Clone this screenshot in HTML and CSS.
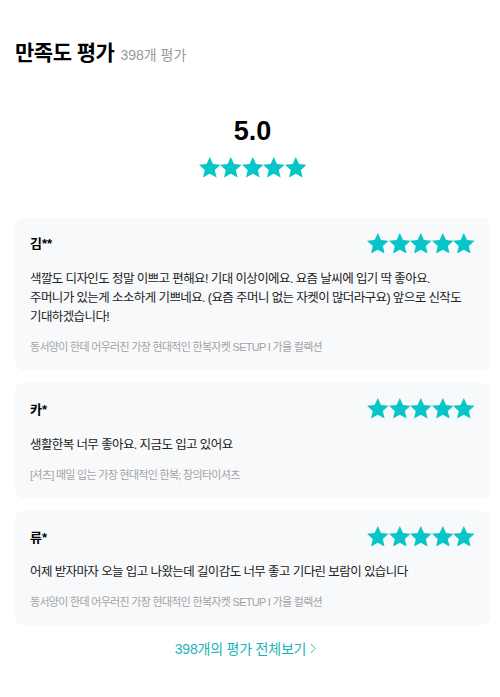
FILE: index.html
```html
<html lang="ko">
<head>
    <meta charset="UTF-8">
    <meta name="viewport" content="width=device-width, initial-scale=1.0">
    <title>만족도 평가</title>
    <link rel="stylesheet" href="styles.css">
</head>
<body>
    <div class="review-section">
        <div class="review-title">
            <h2>만족도 평가</h2>
            <span class="review-count">398개 평가</span>
        </div>

        <div class="review-score">
            <div class="score-num">5.0</div>
            <div class="stars">
                <svg viewBox="1.5 1.5 21 20"><path d="M12 1.5l3.1 6.9 7.4.7-5.6 5 1.7 7.4L12 17.7l-6.6 3.8 1.7-7.4-5.6-5 7.4-.7z"/></svg>
                <svg viewBox="1.5 1.5 21 20"><path d="M12 1.5l3.1 6.9 7.4.7-5.6 5 1.7 7.4L12 17.7l-6.6 3.8 1.7-7.4-5.6-5 7.4-.7z"/></svg>
                <svg viewBox="1.5 1.5 21 20"><path d="M12 1.5l3.1 6.9 7.4.7-5.6 5 1.7 7.4L12 17.7l-6.6 3.8 1.7-7.4-5.6-5 7.4-.7z"/></svg>
                <svg viewBox="1.5 1.5 21 20"><path d="M12 1.5l3.1 6.9 7.4.7-5.6 5 1.7 7.4L12 17.7l-6.6 3.8 1.7-7.4-5.6-5 7.4-.7z"/></svg>
                <svg viewBox="1.5 1.5 21 20"><path d="M12 1.5l3.1 6.9 7.4.7-5.6 5 1.7 7.4L12 17.7l-6.6 3.8 1.7-7.4-5.6-5 7.4-.7z"/></svg>
            </div>
        </div>

        <div class="review-list">
            <div class="review-card">
                <div class="review-head">
                    <span class="review-name">김**</span>
                    <div class="stars">
                        <svg viewBox="1.5 1.5 21 20"><path d="M12 1.5l3.1 6.9 7.4.7-5.6 5 1.7 7.4L12 17.7l-6.6 3.8 1.7-7.4-5.6-5 7.4-.7z"/></svg>
                        <svg viewBox="1.5 1.5 21 20"><path d="M12 1.5l3.1 6.9 7.4.7-5.6 5 1.7 7.4L12 17.7l-6.6 3.8 1.7-7.4-5.6-5 7.4-.7z"/></svg>
                        <svg viewBox="1.5 1.5 21 20"><path d="M12 1.5l3.1 6.9 7.4.7-5.6 5 1.7 7.4L12 17.7l-6.6 3.8 1.7-7.4-5.6-5 7.4-.7z"/></svg>
                        <svg viewBox="1.5 1.5 21 20"><path d="M12 1.5l3.1 6.9 7.4.7-5.6 5 1.7 7.4L12 17.7l-6.6 3.8 1.7-7.4-5.6-5 7.4-.7z"/></svg>
                        <svg viewBox="1.5 1.5 21 20"><path d="M12 1.5l3.1 6.9 7.4.7-5.6 5 1.7 7.4L12 17.7l-6.6 3.8 1.7-7.4-5.6-5 7.4-.7z"/></svg>
                    </div>
                </div>
                <p class="review-text">색깔도 디자인도 정말 이쁘고 편해요! 기대 이상이에요. 요즘 날씨에 입기 딱 좋아요.<br>주머니가 있는게 소소하게 기쁘네요. (요즘 주머니 없는 자켓이 많더라구요) 앞으로 신작도 기대하겠습니다!</p>
                <div class="review-product">동서양이 한데 어우러진 가장 현대적인 한복자켓 SETUP I 가을 컬렉션</div>
            </div>

            <div class="review-card">
                <div class="review-head">
                    <span class="review-name">카*</span>
                    <div class="stars">
                        <svg viewBox="1.5 1.5 21 20"><path d="M12 1.5l3.1 6.9 7.4.7-5.6 5 1.7 7.4L12 17.7l-6.6 3.8 1.7-7.4-5.6-5 7.4-.7z"/></svg>
                        <svg viewBox="1.5 1.5 21 20"><path d="M12 1.5l3.1 6.9 7.4.7-5.6 5 1.7 7.4L12 17.7l-6.6 3.8 1.7-7.4-5.6-5 7.4-.7z"/></svg>
                        <svg viewBox="1.5 1.5 21 20"><path d="M12 1.5l3.1 6.9 7.4.7-5.6 5 1.7 7.4L12 17.7l-6.6 3.8 1.7-7.4-5.6-5 7.4-.7z"/></svg>
                        <svg viewBox="1.5 1.5 21 20"><path d="M12 1.5l3.1 6.9 7.4.7-5.6 5 1.7 7.4L12 17.7l-6.6 3.8 1.7-7.4-5.6-5 7.4-.7z"/></svg>
                        <svg viewBox="1.5 1.5 21 20"><path d="M12 1.5l3.1 6.9 7.4.7-5.6 5 1.7 7.4L12 17.7l-6.6 3.8 1.7-7.4-5.6-5 7.4-.7z"/></svg>
                    </div>
                </div>
                <p class="review-text">생활한복 너무 좋아요. 지금도 입고 있어요</p>
                <div class="review-product">[셔츠] 매일 입는 가장 현대적인 한복; 창의타이셔츠</div>
            </div>

            <div class="review-card">
                <div class="review-head">
                    <span class="review-name">류*</span>
                    <div class="stars">
                        <svg viewBox="1.5 1.5 21 20"><path d="M12 1.5l3.1 6.9 7.4.7-5.6 5 1.7 7.4L12 17.7l-6.6 3.8 1.7-7.4-5.6-5 7.4-.7z"/></svg>
                        <svg viewBox="1.5 1.5 21 20"><path d="M12 1.5l3.1 6.9 7.4.7-5.6 5 1.7 7.4L12 17.7l-6.6 3.8 1.7-7.4-5.6-5 7.4-.7z"/></svg>
                        <svg viewBox="1.5 1.5 21 20"><path d="M12 1.5l3.1 6.9 7.4.7-5.6 5 1.7 7.4L12 17.7l-6.6 3.8 1.7-7.4-5.6-5 7.4-.7z"/></svg>
                        <svg viewBox="1.5 1.5 21 20"><path d="M12 1.5l3.1 6.9 7.4.7-5.6 5 1.7 7.4L12 17.7l-6.6 3.8 1.7-7.4-5.6-5 7.4-.7z"/></svg>
                        <svg viewBox="1.5 1.5 21 20"><path d="M12 1.5l3.1 6.9 7.4.7-5.6 5 1.7 7.4L12 17.7l-6.6 3.8 1.7-7.4-5.6-5 7.4-.7z"/></svg>
                    </div>
                </div>
                <p class="review-text">어제 받자마자 오늘 입고 나왔는데 길이감도 너무 좋고 기다린 보람이 있습니다</p>
                <div class="review-product">동서양이 한데 어우러진 가장 현대적인 한복자켓 SETUP I 가을 컬렉션</div>
            </div>
        </div>

        <a class="review-more" href="#">398개의 평가 전체보기
            <svg viewBox="0 0 8 14"><path d="M1 1l6 6-6 6"/></svg>
        </a>
    </div>
</body>
</html>
```

FILE: styles.css
```css
body {
    margin: 0px;
    background-color: white;
    font-family: "Liberation Sans", "Noto Sans CJK KR", sans-serif;
    color: #111;
}

.review-section {
    padding: 36px 10px 0px 15px;
}

.review-title {
    display: flex;
    align-items: baseline;
    gap: 6px;
}
.review-title h2 {
    margin: 0px;
    font-size: 21px;
    font-weight: bold;
    letter-spacing: -0.5px;
    color: #000;
}
.review-count {
    font-size: 14px;
    color: #999;
}

.review-score {
    display: flex;
    flex-direction: column;
    align-items: center;
    margin-top: 49px;
}
.score-num {
    font-size: 27px;
    font-weight: bold;
    line-height: 32px;
    color: #000;
}
.review-score .stars {
    margin-top: 10px;
}

.stars {
    display: flex;
}
.stars svg {
    width: 21.6px;
    height: 20.6px;
    fill: #08c5c8;
}

.review-list {
    display: flex;
    flex-direction: column;
    gap: 13px;
    margin-top: 40px;
}
.review-card {
    background-color: #f8f9fb;
    border-radius: 8px;
    padding: 15px 15px 15px 15px;
}
.review-head {
    display: flex;
    justify-content: space-between;
    align-items: center;
}
.review-name {
    font-size: 13px;
    font-weight: bold;
    color: #000;
}
.review-text {
    margin: 17px 0px 0px 0px;
    font-size: 12.5px;
    line-height: 19px;
    letter-spacing: -0.6px;
    word-break: keep-all;
    color: #222;
}
.review-product {
    margin-top: 12px;
    font-size: 11px;
    line-height: 16px;
    letter-spacing: -0.7px;
    color: #a3a3a3;
}

.review-more {
    display: flex;
    justify-content: center;
    align-items: center;
    gap: 4px;
    margin-top: 13px;
    padding-right: 14px;
    font-size: 14px;
    letter-spacing: -0.2px;
    color: #1bb4b9;
    text-decoration: none;
}
.review-more svg {
    width: 6px;
    height: 11px;
    fill: none;
    stroke: #1bb4b9;
    stroke-width: 1.2;
}
```
